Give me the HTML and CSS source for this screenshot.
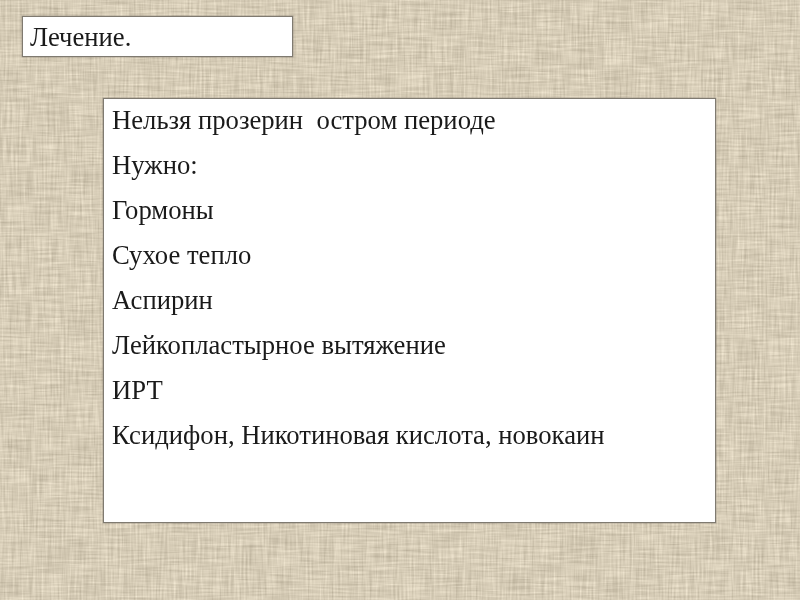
FILE: index.html
```html
<!DOCTYPE html>
<html lang="ru">
<head>
<meta charset="utf-8">
<title>Лечение</title>
<link rel="stylesheet" href="styles.css">
</head>
<body>
<main class="slide">
  <h1 class="title"><span class="soft">Лечение.</span></h1>
  <section class="content">
    <p class="line soft">Нельзя прозерин  остром периоде</p>
    <p class="line soft">Нужно:</p>
    <p class="line soft">Гормоны</p>
    <p class="line soft">Сухое тепло</p>
    <p class="line soft">Аспирин</p>
    <p class="line soft">Лейкопластырное вытяжение</p>
    <p class="line soft">ИРТ</p>
    <p class="line soft">Ксидифон, Никотиновая кислота, новокаин</p>
  </section>
</main>
</body>
</html>
```

FILE: styles.css
```css
* {
  box-sizing: border-box;
}

html,
body {
  margin: 0;
  height: 100%;
}

body {
  overflow: hidden;
  background-color: #d6ccb7;
  background-image: url("data:image/svg+xml,%3Csvg xmlns='http://www.w3.org/2000/svg' width='800' height='600'%3E%3Cfilter id='l' x='0' y='0' width='100%25' height='100%25' color-interpolation-filters='sRGB'%3E%3CfeTurbulence type='fractalNoise' baseFrequency='0.5 0.03' numOctaves='2' seed='4'/%3E%3CfeColorMatrix values='1 0 0 0 0 1 0 0 0 0 1 0 0 0 0 0 0 0 0 1' result='a'/%3E%3CfeTurbulence type='fractalNoise' baseFrequency='0.03 0.5' numOctaves='2' seed='9'/%3E%3CfeColorMatrix values='1 0 0 0 0 1 0 0 0 0 1 0 0 0 0 0 0 0 0 1' result='b'/%3E%3CfeComposite in='a' in2='b' operator='arithmetic' k2='0.5' k3='0.5'/%3E%3CfeColorMatrix values='0.36 0 0 0 0.66 0.36 0 0 0 0.62 0.36 0 0 0 0.535 0 0 0 0 1'/%3E%3C/filter%3E%3Crect width='800' height='600' filter='url(%23l)'/%3E%3C/svg%3E");
  font-family: "Liberation Serif", "Times New Roman", serif;
  color: #1a1a1a;
}

.slide {
  display: flex;
  flex-direction: column;
  align-items: flex-start;
  padding: 16px 0 0 22px;
}

.title {
  width: 271px;
  height: 41px;
  margin: 0;
  padding: 3px 7px;
  background: #fff;
  border: 1px solid #7f7a70;
  box-shadow: 0 0 0 0.5px rgba(127, 122, 112, 0.5);
  font-size: 26.67px;
  font-weight: 400;
  line-height: 34px;
}

.content {
  width: 613px;
  height: 425px;
  margin: 41px 0 0 81px;
  padding: 0 8px;
  background: #fff;
  border: 1px solid #7f7a70;
  box-shadow: 0 0 0 0.5px rgba(127, 122, 112, 0.5);
}

.line {
  margin: 0 0 2px;
  font-size: 26.67px;
  line-height: 43px;
  white-space: pre;
}

.soft {
  display: block;
  filter: blur(0.35px);
}
```
